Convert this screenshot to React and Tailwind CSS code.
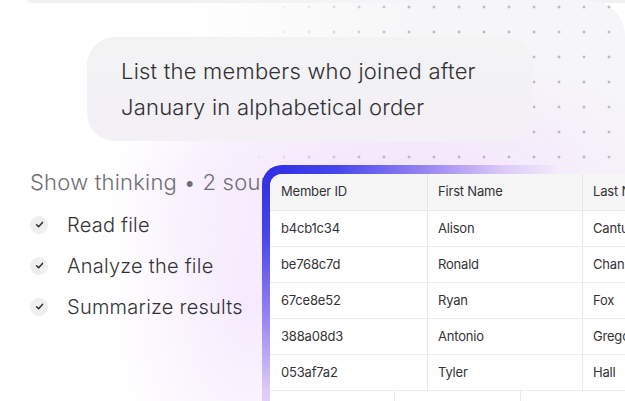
const rows = [
  ["b4cb1c34", "Alison", "Cantu"],
  ["be768c7d", "Ronald", "Chan"],
  ["67ce8e52", "Ryan", "Fox"],
  ["388a08d3", "Antonio", "Gregory"],
  ["053af7a2", "Tyler", "Hall"],
];

const steps = ["Read file", "Analyze the file", "Summarize results"];

function Check() {
  return (
    <span className="flex h-[18px] w-[18px] items-center justify-center rounded-full bg-[#efeff0]">
      <svg width="9" height="9" viewBox="0 0 9 9" fill="none">
        <path d="M1.6 4.8l2 1.9 3.9-4.3" stroke="#2f2f33" strokeWidth="1.5" strokeLinecap="round" strokeLinejoin="round" />
      </svg>
    </span>
  );
}

function MembersTable() {
  return (
    <div className="absolute left-[262px] top-[165px] h-[260px] w-[420px] rounded-tl-[20px] bg-[radial-gradient(ellipse_300px_280px_at_0_0,#2c2ce4_0%,#4646ec_25%,#9a86f2_55%,#dbc9f8_80%,transparent_100%)] pl-[8px] pt-[9px]">
      <div className="h-full overflow-hidden rounded-tl-[12px] bg-white text-[13px] tracking-[-0.015em] text-[#333336]">
        <div className="grid h-[37px] grid-cols-[158px_155px_1fr] border-b border-[#e9e9eb] bg-[#f6f6f7]">
          <div className="flex items-center border-r border-[#e6e6e8] pl-[11px]">Member ID</div>
          <div className="flex items-center border-r border-[#e6e6e8] pl-[10px]">First Name</div>
          <div className="flex items-center pl-[10px]">Last Name</div>
        </div>
        {rows.map((r) => (
          <div key={r[0]} className="grid h-[36px] grid-cols-[158px_155px_1fr] border-b border-[#ececee]">
            <div className="flex items-center border-r border-[#e8e8ea] pl-[11px]">{r[0]}</div>
            <div className="flex items-center border-r border-[#e8e8ea] pl-[10px]">{r[1]}</div>
            <div className="flex items-center pl-[10px]">{r[2]}</div>
          </div>
        ))}
        <div className="grid h-[36px] grid-cols-[125px_126px_92px]">
          <div className="border-r border-[#e8e8ea]" />
          <div className="border-r border-[#e8e8ea]" />
          <div />
        </div>
      </div>
    </div>
  );
}

export default function App() {
  return (
    <div className="relative h-[401px] w-[625px] overflow-hidden bg-white font-['Inter',sans-serif]">
      {/* backdrop */}
      <div className="absolute left-[28px] right-0 top-0 h-[3px] rounded-bl-[3px] bg-[#f1f1f3]" />
      <div className="absolute left-[180px] right-0 top-0 h-[200px] rounded-tr-[36px] bg-[linear-gradient(to_right,rgba(246,246,248,0),#f6f6f8_55%)]" />
      <div className="absolute inset-0 bg-[radial-gradient(ellipse_300px_150px_at_400px_190px,#f2e3fd_0%,rgba(244,230,253,0.6)_50%,transparent_100%)]" />
      <div className="absolute inset-0 bg-[radial-gradient(ellipse_140px_230px_at_250px_300px,#f6eafd_0%,transparent_100%)]" />
      <div className="absolute left-0 right-0 top-0 h-[165px] bg-[radial-gradient(circle,#a19bad_0.9px,transparent_1.4px)] bg-[length:25px_25px] bg-[position:-3.5px_-5.5px] [mask-image:linear-gradient(100deg,transparent_40%,black_62%)]" />

      <div className="relative font-[350]">
        <div className="ml-[87px] mt-[37px] w-[446px] rounded-[28px] bg-[linear-gradient(to_bottom,#f3f3f4,#f3f0f6)] px-[34px] py-[16px] text-[22px] leading-[36px] tracking-[0.01em] text-[#303033]">
          <p>List the members who joined after</p>
          <p>January in alphabetical order</p>
        </div>

        <div className="ml-[30px] mt-[27px] whitespace-nowrap text-[22px] leading-[28px] tracking-[0.01em] text-[#6f6f74]">
          Show thinking • 2 sources
        </div>

        <ul className="ml-[30px] mt-[8px]">
          {steps.map((s) => (
            <li key={s} className="flex h-[41px] items-center gap-[19px] text-[20px] tracking-[0.012em] text-[#333336]">
              <Check />
              <span>{s}</span>
            </li>
          ))}
        </ul>
      </div>

      <MembersTable />
    </div>
  );
}
